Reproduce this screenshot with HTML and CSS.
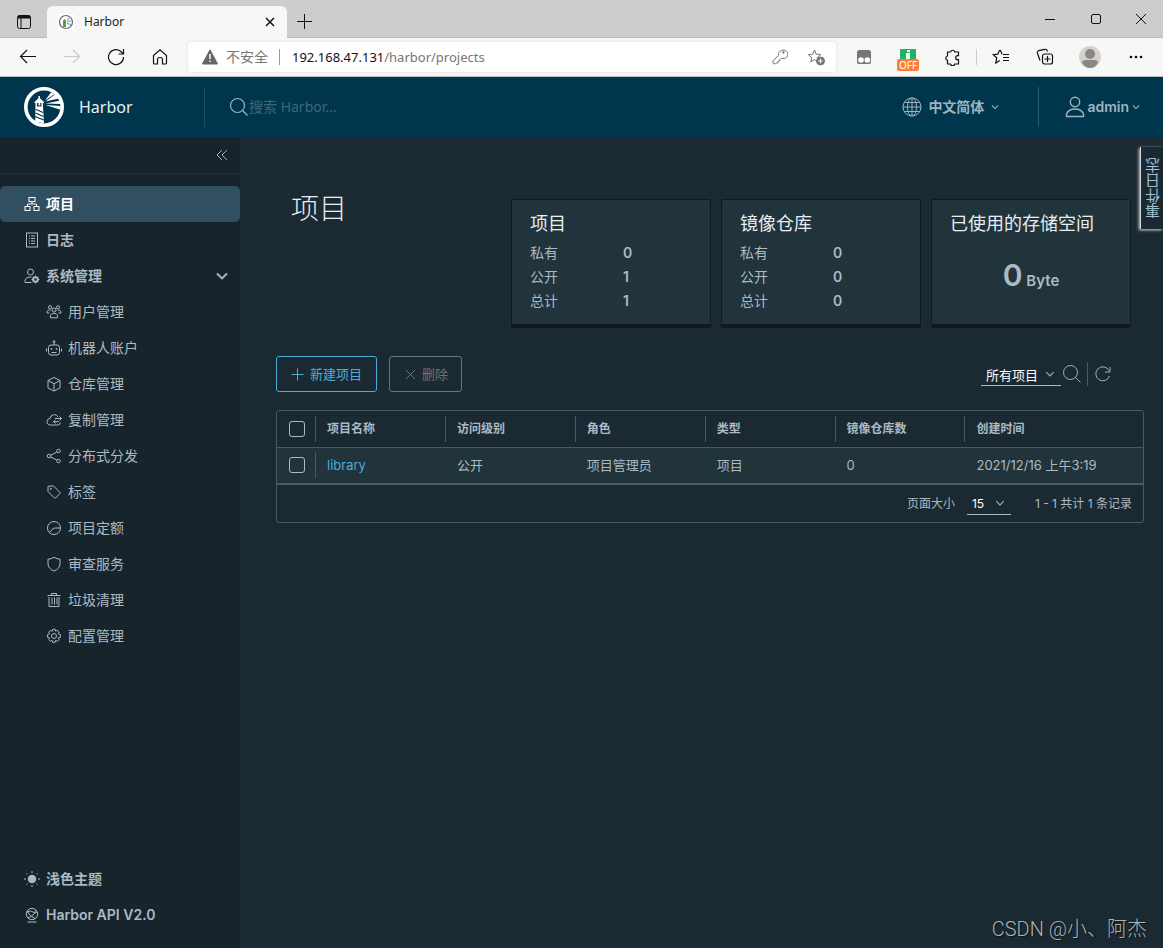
FILE: index.html
```html
<!DOCTYPE html>
<html lang="zh-CN">
<head>
<meta charset="utf-8">
<meta name="viewport" content="width=device-width, initial-scale=1">
<title>Harbor</title>
<link rel="stylesheet" href="styles.css">
</head>
<body>
<svg class="defs" aria-hidden="true">
  <symbol id="chevron" viewBox="0 0 16 16"><path d="M3 5.500 8 10.500l5-5"/></symbol>
  <symbol id="search" viewBox="0 0 20 20"><circle cx="8.500" cy="8.500" r="7"/><path d="m13.500 13.500 5 5"/></symbol>
  <symbol id="star" viewBox="0 0 18 18"><path d="m7.500 2 1.700 4.200 4.500.4-3.400 3 1 4.400-3.800-2.300L3.700 14l1-4.400-3.400-3 4.500-.4z"/></symbol>
</svg>
<div class="window">
  <div class="tabstrip">
    <button class="bare tab-menu" aria-label="标签页操作">
      <svg class="line dark" width="16" height="16" viewBox="0 0 16 16"><rect x="1.500" y="1.500" width="13" height="13" rx="2"/><path d="M5 4v10" /><path d="M2 3h12" stroke-width="3"/></svg>
    </button>
    <div class="tab">
      <svg width="16" height="16" viewBox="0 0 16 16"><rect width="16" height="16" fill="#fff"/><circle cx="8" cy="8" r="6.500" fill="#fff" stroke="#666" stroke-width="1.200"/><path d="M5 13V6.500L6.500 5 8 6.500V13z" fill="#5a9b3c"/><path d="m9 6 3.500-3M9 7.500l4.500-.5M9 9l4 2" stroke="#8fb8dd" stroke-width="1.500"/></svg>
      <span class="tab-title">Harbor</span>
      <button class="bare" aria-label="关闭标签页"><svg class="line dark" width="10" height="10" viewBox="0 0 10 10" stroke-width="1.500"><path d="m1 1 8 8M9 1 1 9"/></svg></button>
    </div>
    <button class="bare new-tab" aria-label="新建标签页"><svg class="line dark" width="15" height="15" viewBox="0 0 15 15"><path d="M7.500 0v15M0 7.500h15"/></svg></button>
    <div class="window-buttons">
      <button class="bare" aria-label="最小化"><svg class="line dark" width="12" height="12" viewBox="0 0 12 12"><path d="M1 6.500h10"/></svg></button>
      <button class="bare" aria-label="最大化"><svg class="line dark" width="12" height="12" viewBox="0 0 12 12"><rect x="1.500" y="1.500" width="9" height="9" rx="1.500"/></svg></button>
      <button class="bare" aria-label="关闭"><svg class="line dark" width="12" height="12" viewBox="0 0 12 12"><path d="m1 1 10 10M11 1 1 11"/></svg></button>
    </div>
  </div>

  <div class="toolbar">
    <div class="nav-buttons">
      <button class="bare" aria-label="后退"><svg class="line dark" width="18" height="16" viewBox="0 0 18 16" stroke-width="1.200"><path d="M17 7.500H1.500M8 1 1.500 7.500 8 14"/></svg></button>
      <button class="bare" aria-label="前进"><svg class="line pale" width="18" height="16" viewBox="0 0 18 16" stroke-width="1.200"><path d="M1 7.500h15.500M10 1l6.500 6.500L10 14"/></svg></button>
      <button class="bare" aria-label="刷新"><svg class="line dark" width="18" height="18" viewBox="0 0 18 18" stroke-width="1.200"><path d="M16.500 9A7.500 7.500 0 1 1 14.500 4L16 5.500M16.500 1v5h-5"/></svg></button>
      <button class="bare" aria-label="主页"><svg class="line dark" width="18" height="18" viewBox="0 0 18 18" stroke-width="1.200"><path d="M2.500 7.500 9 1.800l6.500 5.700V15a1 1 0 0 1-1 1h-3v-4.500a2 2 0 0 0-2-2h-1a2 2 0 0 0-2 2V16h-3a1 1 0 0 1-1-1z"/></svg></button>
    </div>
    <div class="address">
      <svg width="16" height="16" viewBox="0 0 16 16"><path d="M8 .8 15.600 15H.4z" fill="#666" stroke="#666" stroke-linejoin="round"/><path d="M8 5v5M8 11.500v1.500" stroke="#fff" stroke-width="1.500"/></svg>
      <span class="insecure">不安全</span>
      <span class="url"><b>192.168.47.131</b>/harbor/projects</span>
      <button class="bare" aria-label="密码"><svg class="line grey" width="16" height="16" viewBox="0 0 16 16"><circle cx="11.500" cy="3.500" r=".8" fill="#767676"/><path d="M9.800 1.500a4.300 4.300 0 1 1 .6 8H9l-1 1v1.300H6.500l-.5.700V14H4.500l-1 .7H1.800a.8.800 0 0 1-.8-.8v-2l5.600-5.600a4.300 4.300 0 0 1 3.200-4.800z"/></svg></button>
      <button class="bare" aria-label="收藏此页"><svg class="line grey" width="18" height="18" viewBox="0 0 18 18"><use href="#star"/><circle cx="13.500" cy="13" r="4" fill="#767676"/><path d="M13.500 10.700v4.600M11.200 13h4.600" stroke="#fff"/></svg></button>
    </div>
    <div class="extensions">
      <button class="bare" aria-label="扩展"><svg width="16" height="16" viewBox="0 0 16 16"><rect x="1" y="1" width="14" height="14" rx="2" fill="#767676"/><circle cx="5" cy="11" r="2.800" fill="#fff"/><circle cx="11.300" cy="11" r="2.800" fill="#fff"/></svg></button>
      <button class="bare ext" aria-label="扩展 OFF"><svg width="16" height="16" viewBox="0 0 16 16"><rect width="16" height="16" rx="1" fill="#27ae69"/><path d="M7 1h3v2H7zM6 4h4v7H6z" fill="#e8fff0"/></svg><span class="off">OFF</span></button>
      <button class="bare" aria-label="扩展中心"><svg class="line dark" width="17" height="17" viewBox="0 0 17 17" stroke-width="1.200"><path d="M3.500 3h3a2.200 2.200 0 0 1 4.300 0h3.700v3.700h-.8a2 2 0 0 0 0 4h.8V15h-3.700a2.200 2.200 0 0 1-4.300 0H3.500v-3.700a2.200 2.200 0 0 1 0-4.300z"/></svg></button>
      <span class="rule"></span>
      <button class="bare" aria-label="收藏夹"><svg class="line dark" width="18" height="18" viewBox="0 0 18 18" stroke-width="1.200"><path d="M10 6.200 8.700 2.800a.8.800 0 0 0-1.400 0L5.800 6.200l-4.500.5 3.400 3L3.800 15l4-2.400M11 6.500h6M11 9.500h6M11 12.500h6"/></svg></button>
      <button class="bare" aria-label="集锦"><svg class="line dark" width="18" height="18" viewBox="0 0 18 18" stroke-width="1.200"><rect x="6.500" y="6" width="10" height="10" rx="2"/><path d="M11.500 8v6M8.500 11h6M4 12.500 1.300 5A2 2 0 0 1 2.500 2.700L9 1.300a2 2 0 0 1 2.300 1.500l.2.700"/></svg></button>
      <button class="bare wide" aria-label="个人资料"><svg width="22" height="22" viewBox="0 0 22 22"><circle cx="11" cy="11" r="11" fill="#d5d2cd"/><circle cx="11" cy="8" r="5" fill="#8b8784"/><path d="M3 17q0-3 4-3h8q4 0 4 3-3 5-8 5t-8-5z" fill="#8b8784"/></svg></button>
      <button class="bare wide" aria-label="更多"><svg width="14" height="4" viewBox="0 0 14 4"><circle cx="2" cy="2" r="1.300"/><circle cx="7" cy="2" r="1.300"/><circle cx="12" cy="2" r="1.300"/></svg></button>
    </div>
  </div>

  <header class="header">
    <a class="brand" href="#">
      <svg width="40" height="40" viewBox="0 0 40 40"><circle cx="20" cy="20" r="18.200" fill="#00364d" stroke="#fff" stroke-width="3.600"/><path d="M10.500 15 15.200 10.500 20 15v1h-9.500z" fill="#fff"/><path d="M15.200 12V9M12.300 15v5M18.200 15v5" stroke="#fff" stroke-width="1.500"/><path d="M14.500 15.500h1.800v3h-1.800z" fill="#fff"/><path d="M11.500 19.500H19l1 17-8.800-2z" fill="#fff"/><path d="m12 22.500 7 3M11.500 26l8 3.500M11 29.500l8.800 3.500" stroke="#00364d" stroke-width="1.200"/><path d="m21 13.500 6-8 3.500 1.500zM21.500 14.500 31.500 7l3 4.500zM21.500 16.500l15-3v3.500zM21.500 18l15 1v3.800z" fill="#fff"/></svg>
      <span>Harbor</span>
    </a>
    <label class="search">
      <svg class="line soft" width="20" height="20" stroke-width="1.200"><use href="#search"/></svg>
      <input type="text" placeholder="搜索 Harbor..." aria-label="搜索 Harbor">
    </label>
    <button class="bare language">
      <svg class="line soft" width="20" height="20" viewBox="0 0 20 20"><circle cx="10" cy="10" r="9"/><ellipse cx="10" cy="10" rx="4.500" ry="9"/><path d="M10 1v18M1 10h18M2.500 5.500h15M2.500 14.500h15"/></svg>
      <span>中文简体</span>
      <svg class="line soft" width="10" height="10" stroke-width="1.800"><use href="#chevron"/></svg>
    </button>
    <button class="bare user">
      <svg class="line soft" width="20" height="22" viewBox="0 0 20 22" stroke-width="1.400"><circle cx="10" cy="6" r="4.700"/><path d="M1.500 20.500v-2.800Q4 13 10 13t8.500 4.700v2.800z"/></svg>
      <span>admin</span>
      <svg class="line soft" width="10" height="10" stroke-width="1.800"><use href="#chevron"/></svg>
    </button>
  </header>

  <div class="body">
    <nav class="sidebar">
      <div class="collapse"><button class="bare" aria-label="收起"><svg class="line soft" width="12" height="12" viewBox="0 0 12 12"><path d="M6 1 1 6l5 5M11 1 6 6l5 5"/></svg></button></div>
      <div class="menu">
        <a class="item active" href="#"><svg class="line" width="16" height="16" viewBox="0 0 16 16"><rect x="5" y="1.500" width="6" height="4"/><rect x="1" y="10.500" width="5" height="4"/><rect x="10" y="10.500" width="5" height="4"/><path d="M8 5.500V8M3.500 10.500V8h9v2.500"/></svg>项目</a>
        <a class="item" href="#"><svg class="line" width="16" height="16" viewBox="0 0 16 16"><rect x="2.500" y="1" width="11" height="14"/><path d="M5 4h1m1 0h4M5 6.500h1m1 0h4M5 9h1m1 0h4M5 11.500h1m1 0h4"/></svg>日志</a>
        <button class="bare item"><svg class="line" width="16" height="16" viewBox="0 0 16 16"><circle cx="6.500" cy="4" r="3"/><path d="M7.500 14.500H1V12q1-3 5.500-3h1"/><circle cx="11.500" cy="11.500" r="2.300" stroke-width="2"/><path d="M11.500 7.500v8M7.500 11.500h8m-6.800-2.800 5.600 5.600m0-5.600-5.600 5.600" stroke-dasharray="1.500 5"/></svg>系统管理<svg class="line caret" width="16" height="16" stroke-width="1.800"><use href="#chevron"/></svg></button>
        <div class="submenu">
          <a class="item" href="#"><svg class="line" width="16" height="16" viewBox="0 0 16 16"><circle cx="8" cy="6" r="2"/><circle cx="4" cy="3.300" r="1.600"/><circle cx="12" cy="3.300" r="1.600"/><path d="M4.500 13.800v-2.600q1-2 3.500-2t3.500 2v2.600zM1 9V7.500Q2 6 4.500 6M15 9V7.500Q14 6 11.500 6M1 9h2.500M15 9h-2.500"/></svg>用户管理</a>
          <a class="item" href="#"><svg class="line" width="16" height="16" viewBox="0 0 16 16"><rect x="2.500" y="5" width="11" height="10" rx="2.500"/><path d="M8 5V2.500M.5 8.500v3M15.500 8.500v3M5.500 12.500h5"/><circle cx="8" cy="1.700" r="1"/><circle cx="5.500" cy="9" r=".6"/><circle cx="10.500" cy="9" r=".6"/></svg>机器人账户</a>
          <a class="item" href="#"><svg class="line" width="16" height="16" viewBox="0 0 16 16"><path d="m8 1.500 6 3v7.500l-6 3-6-3V4.500zM2 4.500l6 3.200 6-3.200M8 7.700V15"/></svg>仓库管理</a>
          <a class="item" href="#"><svg class="line" width="16" height="16" viewBox="0 0 16 16"><path d="M12 4.800A4.300 4.300 0 0 0 4 6.500 3.300 3.300 0 0 0 3.500 13h8a3 3 0 0 0 3-2.500M9 6.500h6.500M13.500 4.500l2 2-2 2M13 9.700H7.500M9.500 8l-2 1.700 2 1.700"/></svg>复制管理</a>
          <a class="item" href="#"><svg class="line" width="16" height="16" viewBox="0 0 16 16"><circle cx="3" cy="8" r="1.800"/><circle cx="12.500" cy="3" r="1.800"/><circle cx="12.500" cy="13" r="1.800"/><path d="m4.800 7.200 6-3.200M4.800 9l6 3"/></svg>分布式分发</a>
          <a class="item" href="#"><svg class="line" width="16" height="16" viewBox="0 0 16 16"><path d="M2 3a1 1 0 0 1 1-1h4.500L14 8.500v1L9.500 14h-1L2 7.500z"/><circle cx="4.800" cy="4.800" r=".6"/></svg>标签</a>
          <a class="item" href="#"><svg class="line" width="16" height="16" viewBox="0 0 16 16"><circle cx="8" cy="8" r="6.500"/><path d="m3.500 12.500 3.300-3.800q1-.7 3-.7h4.700"/></svg>项目定额</a>
          <a class="item" href="#"><svg class="line" width="16" height="16" viewBox="0 0 16 16"><path d="M8 1.200q3 2 6 2v4.500q0 5-6 7.300-6-2.300-6-7.300V3.200q3 0 6-2z"/></svg>审查服务</a>
          <a class="item" href="#"><svg class="line" width="16" height="16" viewBox="0 0 16 16"><path d="M1.500 3.500h13M5.500 3.500v-2h5v2M3 5v9.500h10V5M6 5.500v7M8.500 5.500v7M11 5.500v7"/></svg>垃圾清理</a>
          <a class="item" href="#"><svg class="line" width="16" height="16" viewBox="0 0 16 16"><circle cx="8" cy="8" r="2.500"/><path d="m6.800 1.300h2.400l.5 1.900 1.700-.9 1.800 1.700-1 1.700 2.200.8v2.800l-2.100.5.900 1.800-1.800 1.700-1.700-.9-.6 2H6.800l-.6-2-1.800.9-1.700-1.700.9-1.800-2-.5V6.500l2-.7-.9-1.700 1.700-1.700 1.800.9z"/></svg>配置管理</a>
        </div>
      </div>
      <div class="menu-foot">
        <button class="bare item"><svg class="line" width="16" height="16" viewBox="0 0 16 16"><circle cx="8" cy="8" r="3.800" fill="currentColor"/><path d="M8 0v2M8 14v2M0 8h2M14 8h2M2.500 2.500l1 1M12.500 12.500l1 1M13.500 2.500l-1 1M3.500 12.500l-1 1"/></svg>浅色主题</button>
        <a class="item" href="#"><svg class="line" width="16" height="16" viewBox="0 0 16 16"><circle cx="8" cy="7" r="5.700"/><path d="M3.500 15h9M3 5q4-2 6 0t4 0M4 10.500q5 0 7.500-7M4 4q0 4 7 7.500"/></svg>Harbor API V2.0</a>
      </div>
    </nav>

    <main class="content">
      <section class="summary">
        <h1>项目</h1>
        <div class="cards">
          <article class="card"><h2>项目</h2><dl><dt>私有</dt><dd>0</dd><dt>公开</dt><dd>1</dd><dt>总计</dt><dd>1</dd></dl></article>
          <article class="card"><h2>镜像仓库</h2><dl><dt>私有</dt><dd>0</dd><dt>公开</dt><dd>0</dd><dt>总计</dt><dd>0</dd></dl></article>
          <article class="card"><h2>已使用的存储空间</h2><p class="storage"><span class="amount">0</span> Byte</p></article>
        </div>
      </section>

      <div class="actions">
        <button class="btn primary"><svg class="line" width="13" height="13" viewBox="0 0 13 13"><path d="M6.500.5v12M.5 6.500h12"/></svg>新建项目</button>
        <button class="btn" disabled><svg class="line" width="11" height="11" viewBox="0 0 11 11"><path d="m1 1 9 9M10 1 1 10"/></svg>删除</button>
        <div class="filters">
          <span class="select"><select aria-label="项目筛选"><option>所有项目</option></select><svg class="line soft" width="12" height="12" stroke-width="1.500"><use href="#chevron"/></svg></span>
          <button class="bare" aria-label="搜索"><svg class="line soft" width="20" height="20"><use href="#search"/></svg></button>
          <button class="bare refresh" aria-label="刷新"><svg class="line soft" width="16" height="16" viewBox="0 0 16 16"><path d="M14.500 10A7 7 0 1 1 14 4.500M15 1v5h-5"/></svg></button>
        </div>
      </div>

      <div class="grid">
        <table>
          <thead><tr><th class="check"><input type="checkbox" aria-label="全选"></th><th>项目名称</th><th>访问级别</th><th>角色</th><th>类型</th><th>镜像仓库数</th><th class="created">创建时间</th></tr></thead>
          <tbody><tr><td class="check"><input type="checkbox" aria-label="选择 library"></td><td><a href="#">library</a></td><td>公开</td><td>项目管理员</td><td>项目</td><td>0</td><td>2021/12/16 上午3:19</td></tr></tbody>
        </table>
        <div class="pager">
          <label for="size">页面大小</label>
          <span class="select small"><select id="size"><option>15</option></select><svg class="line soft" width="12" height="12" stroke-width="1.500"><use href="#chevron"/></svg></span>
          <span class="range">1 - 1 共计 1 条记录</span>
        </div>
      </div>
      <p class="credit">CSDN @小、阿杰</p>
      <button class="bare events">事件日志</button>
    </main>
  </div>
</div>
</body>
</html>
```

FILE: styles.css
```css
* { box-sizing: border-box; }

body {
  margin: 0;
  background: #1b2a32;
  color: #acbac3;
  font: 13px/24px Inter, "Noto Sans CJK SC", sans-serif;
}

h1, h2, p, dl, dd { margin: 0; }
a { color: inherit; text-decoration: none; }
button, input, select { font: inherit; color: inherit; }
svg { flex: none; display: block; }

.defs { position: absolute; width: 0; height: 0; }
.bare {
  display: flex;
  align-items: center;
  justify-content: center;
  padding: 0;
  border: 0;
  background: none;
}
.line { fill: none; stroke: currentColor; }
.dark { color: #111; }
.pale { color: #c9c9c9; }
.grey { color: #767676; }
.soft { color: #9fb3bd; }

.window { display: flex; flex-direction: column; min-height: 100vh; }

/* Browser frame */
.tabstrip {
  display: flex;
  align-items: center;
  height: 38px;
  background: #cdcdcd;
  border-bottom: 1px solid #bcbcbc;
}
.tab-menu { width: 47px; padding-top: 6px; }
.tab {
  display: flex;
  align-items: center;
  align-self: flex-end;
  gap: 10px;
  width: 240px;
  height: 32px;
  margin-bottom: -1px;
  padding: 0 12px 0 11px;
  border-radius: 6px 6px 0 0;
  background: #f7f7f7;
  color: #222;
  font: 12px/16px "Noto Sans", sans-serif;
}
.tab-title { flex: 1; }
.new-tab { padding: 6px 0 0 10px; }
.window-buttons { display: flex; margin-left: auto; }
.window-buttons .bare { width: 46px; }
.window-buttons .bare:last-child { width: 44px; }

.toolbar {
  display: flex;
  align-items: center;
  height: 39px;
  background: #f7f7f7;
  border-bottom: 1px solid #b9bcbe;
}
.nav-buttons { display: flex; padding: 0 6px; }
.nav-buttons .bare { width: 44px; }
.address {
  display: flex;
  flex: 1;
  align-items: center;
  gap: 8px;
  height: 30px;
  padding: 0 6px 0 14px;
  border-radius: 4px;
  background: #fff;
  box-shadow: 0 0 3px #ddd;
  color: #767676;
  font: 14px/20px "Noto Sans", "Noto Sans CJK SC", sans-serif;
}
.insecure {
  padding-right: 11px;
  border-right: 1px solid #999;
  line-height: 16px;
}
.url { flex: 1; padding-left: 4px; font-size: 13px; }
.url b { color: #111; font-weight: 400; }
.address .bare { width: 28px; }
.extensions { display: flex; align-items: center; padding: 0 4px 0 6px; }
.extensions .bare { width: 44px; height: 36px; }
.extensions .wide { width: 46px; }
.rule { width: 1px; height: 16px; margin: 0 2px; background: #ccc; }
.ext { position: relative; }
.off {
  position: absolute;
  left: 11px;
  bottom: 4px;
  padding: 0 2px;
  border-radius: 2px;
  background: #ff7b39;
  color: #fff;
  font: 10px/12px "Noto Sans", sans-serif;
}

/* Application header */
.header {
  display: flex;
  align-items: center;
  height: 60px;
  background: #00364d;
}
.brand {
  display: flex;
  align-items: center;
  gap: 15px;
  width: 205px;
  height: 40px;
  padding-left: 24px;
  border-right: 1px solid #1d4f64;
  color: #e9eff2;
  font: 16px/24px "Noto Sans", sans-serif;
}
.search { display: flex; flex: 1; align-items: center; padding-left: 24px; }
.search input {
  width: 200px;
  padding: 0;
  border: 0;
  background: none;
  font: 14px/24px "Noto Sans", "Noto Sans CJK SC", sans-serif;
}
.search input::placeholder { color: #3f6678; opacity: 1; }
.language, .user { color: #9fb3bd; font-size: 14px; font-weight: 600; }
.language { gap: 6px; padding-right: 38px; }
.user {
  gap: 2px;
  height: 40px;
  padding: 0 22px 0 26px;
  border-left: 1px solid #2b5b6e;
}

/* Side navigation */
.body { display: flex; flex: 1; }
.sidebar {
  display: flex;
  flex: 0 0 240px;
  flex-direction: column;
  background: #17242b;
  padding-bottom: 15px;
}
.collapse {
  display: flex;
  justify-content: flex-end;
  height: 37px;
  padding-right: 12px;
  border-bottom: 1px solid #22323b;
}
.collapse .bare { width: 12px; }
.menu { flex: 1; padding-top: 12px; }
.item {
  display: flex;
  align-items: center;
  justify-content: flex-start;
  gap: 6px;
  width: 100%;
  height: 36px;
  padding: 0 10px 0 24px;
  font-size: 14px;
  font-weight: 600;
}
.item .caret { margin-left: auto; }
.active { border-radius: 5px; background: #324f62; color: #fff; }
.submenu .item { padding-left: 46px; font-weight: 400; }

/* Content */
.content {
  position: relative;
  display: flex;
  flex: 1;
  flex-direction: column;
  min-width: 0;
  padding: 50px 19px 4px 36px;
}
.summary {
  display: flex;
  justify-content: space-between;
  padding: 0 13px 0 15px;
}
h1 { color: #eaedf0; font-size: 28px; font-weight: 300; line-height: 44px; }
.cards { display: flex; gap: 10px; padding-top: 12px; }
.card {
  width: 200px;
  height: 129px;
  padding: 12px 18px;
  border: 1px solid #10191e;
  border-bottom-width: 4px;
  border-radius: 3px;
  background: #21333b;
}
.card h2 { color: #eaedf0; font-size: 18px; font-weight: 400; line-height: 24px; }
.card dl {
  display: grid;
  grid-template-columns: 93px 1fr;
  padding-top: 5px;
  font-size: 14px;
}
.card dd { font-weight: 600; }
.storage { padding-top: 21px; text-align: center; font-size: 15px; font-weight: 600; line-height: 36px; }
.amount { font-size: 30px; }

.actions { display: flex; align-items: center; gap: 12px; padding: 28px 27px 18px 0; }
.btn {
  display: flex;
  align-items: center;
  gap: 6px;
  height: 36px;
  padding: 0 14px;
  border: 1px solid #4aaed9;
  border-radius: 3px;
  background: none;
  color: #4aaed9;
}
.btn:disabled { padding: 0 13px 0 15px; border-color: #68747b; color: #68747b; }
.filters { display: flex; align-items: center; margin-left: auto; }
.filters .bare { width: 26px; height: 24px; padding-right: 4px; }
.filters .refresh { width: 30px; padding: 0; border-left: 1px solid #495a65; }
.select {
  display: flex;
  align-items: center;
  justify-content: flex-end;
  width: 80px;
  border-bottom: 1px solid #acbac3;
}
.select svg { margin: 0 5px 0 -17px; pointer-events: none; }
.select select {
  appearance: none;
  width: 100%;
  height: 22px;
  padding: 0 18px 0 5px;
  border: 0;
  background: none;
  color: #fff;
}
.small { width: 44px; }

.grid { border: 1px solid #495a65; border-radius: 3px; }
table { width: 100%; border-collapse: collapse; table-layout: fixed; }
th, td { width: 15%; padding: 0 0 0 12px; text-align: left; border-bottom: 1px solid #495a65; }
th {
  height: 36px;
  background: linear-gradient(#495a65, #495a65) left center / 1px 26px no-repeat;
  font-size: 12px;
  font-weight: 600;
}
th.check { background: none; }
.check { width: 38px; line-height: 0; }
th.created { width: auto; }
tbody tr { background: #21333b; }
td { height: 37px; border-bottom-width: 2px; }
td.check + td { background: linear-gradient(#495a65, #495a65) left center / 1px 26px no-repeat; }
td a { color: #4aaed9; }
input[type="checkbox"] {
  appearance: none;
  width: 16px;
  height: 16px;
  margin: 0;
  border: 1px solid #acbac3;
  border-radius: 3px;
}
.pager {
  display: flex;
  align-items: center;
  justify-content: flex-end;
  gap: 12px;
  height: 37px;
  padding-right: 11px;
  font-size: 12px;
}
.range { padding-left: 12px; }

.credit {
  position: absolute;
  right: 16px;
  bottom: 4px;
  color: #adb2b5;
  font: 20px/30px Roboto, "Noto Sans CJK SC", sans-serif;
  font-weight: 300;
  text-shadow: 1px 1px 1px #0c1216;
}
.events {
  position: absolute;
  top: 10px;
  right: 0;
  width: 23px;
  height: 82px;
  padding-right: 4px;
  border-right: 1px solid #d5d9db;
  box-shadow: 1px -1px 3px #d5d9db;
  background: #1b2a32;
  color: #9fc0d0;
  font-size: 15px;
  line-height: 18px;
  writing-mode: vertical-rl;
  transform: rotate(180deg);
}
```
